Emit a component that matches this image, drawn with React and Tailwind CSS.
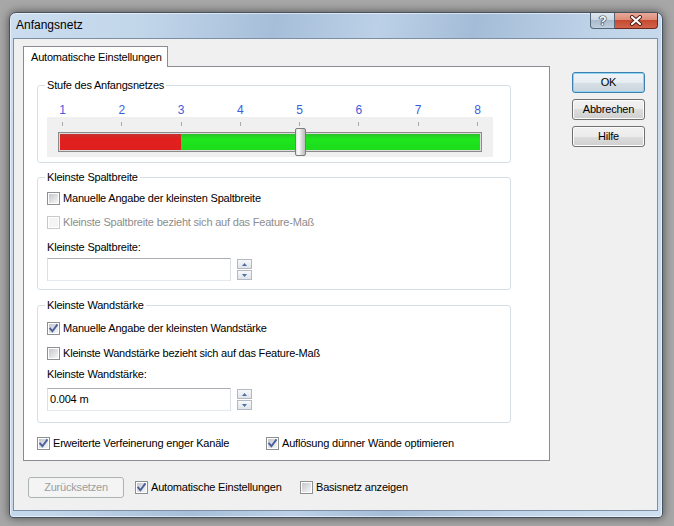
import React from 'react';

const font = "font-['Liberation_Sans',Arial,sans-serif]";

function Check({ checked = false, disabled = false }) {
    return (
        <span className={`relative block w-[13px] h-[13px] shrink-0 border p-[1px] bg-white ${disabled ? 'border-[#c9c9c9]' : 'border-[#8e8f8f]'}`}>
            <span className={`block w-full h-full ${disabled ? 'bg-[#f4f4f4]' : 'bg-linear-to-br from-[#c4c7cd] to-[#f7f7f7]'}`} />
            {checked && (
                <svg className="absolute left-0 top-0" width="11" height="11" viewBox="0 0 11 11">
                    <path d="M2.2 5.6 L4.4 8.2 L8.9 2.2" fill="none" stroke="#4a5f9c" strokeWidth="1.9" strokeLinecap="square" />
                </svg>
            )}
        </span>
    );
}

function CheckRow({ checked, disabled, children, className = '' }) {
    return (
        <div className={`flex items-center h-[13px] gap-[3px] ${className}`}>
            <Check checked={checked} disabled={disabled} />
            <span className={`whitespace-nowrap ${disabled ? 'text-[#8d8d8d]' : ''}`}>{children}</span>
        </div>
    );
}

function Group({ title, className = '', children }) {
    return (
        <div className={`relative ml-[13px] w-[474px] border border-[#d5dfe5] rounded-[3px] ${className}`}>
            <span className="absolute left-[7px] -top-[7px] px-[2px] bg-white leading-[13px] whitespace-nowrap">{title}</span>
            {children}
        </div>
    );
}

function Button({ children, primary, disabled, className = '' }) {
    const look = disabled
        ? 'border-[#adb2b5] bg-[#f4f4f4] text-[#9d9d9d]'
        : primary
            ? 'border-[#3c7fb1] bg-[linear-gradient(#eff4f7,#e6edf2_50%,#d6dfe6_50%,#cbd5dd)] shadow-[inset_0_0_0_1px_#8fd4f2]'
            : 'border-[#707070] bg-[linear-gradient(#f2f2f2,#ebebeb_50%,#dddddd_50%,#cfcfcf)] shadow-[inset_0_0_0_1px_#fcfcfc]';
    return (
        <div className={`h-[21px] flex items-center justify-center border rounded-[3px] ${look} ${className}`}>
            {children}
        </div>
    );
}

function SpinField({ value }) {
    return (
        <div className="flex items-center">
            <div className="w-[184px] h-[23px] border border-[#abadb3] border-l-[#dbdfe6] border-r-[#dbdfe6] border-b-[#e3e9ef] bg-white flex items-center pl-[2px]">
                {value}
            </div>
            <div className="ml-[6px] flex flex-col gap-[1px]">
                <div className="w-[15px] h-[10px] border border-[#b3b9c2] bg-linear-to-b from-[#f7f8fa] to-[#dfe4ea] flex items-center justify-center">
                    <svg width="5" height="3" viewBox="0 0 5 3"><path d="M0 3 L2.5 0 L5 3 Z" fill="#4d6fa3" /></svg>
                </div>
                <div className="w-[15px] h-[10px] border border-[#b3b9c2] bg-linear-to-b from-[#f7f8fa] to-[#dfe4ea] flex items-center justify-center">
                    <svg width="5" height="3" viewBox="0 0 5 3"><path d="M0 0 L2.5 3 L5 0 Z" fill="#4d6fa3" /></svg>
                </div>
            </div>
        </div>
    );
}

const levels = [1, 2, 3, 4, 5, 6, 7, 8];

export default function App() {
    return (
        <div className={`w-[674px] h-[526px] bg-[#a7a7a7] pt-[12px] pl-[9px] overflow-hidden text-[11px] leading-[13px] tracking-[-0.2px] text-black ${font}`}>
            <div className="w-[654px] h-[506px] flex flex-col border border-[#46535f] rounded-t-[7px] rounded-b-[4px] bg-[linear-gradient(100deg,#cbddef_0%,#c2d6ea_18%,#a6bed9_36%,#bcd1e7_50%,#a4bcd7_63%,#c0d4e9_80%,#cfe0f0_100%)] shadow-[0_0_10px_rgba(0,0,0,0.55),inset_0_0_0_1px_rgba(255,255,255,0.55)]">
                {/* title bar */}
                <div className="h-[25px] flex items-start">
                    <span className="ml-[6px] mt-[5px] text-[12px] leading-[14px] tracking-normal">Anfangsnetz</span>
                    <div className="ml-auto mr-[4px] flex">
                        <div className="w-[25px] h-[16px] border border-[#56667a] border-t-0 rounded-bl-[4px] bg-[linear-gradient(#dfe7ef,#cad6e2_50%,#a9bbcd_50%,#bfcfdf)] flex items-center justify-center">
                            <span className="text-white font-bold text-[13px] leading-[13px] [text-shadow:0_0_1px_#1c2a3a,0_0_1px_#1c2a3a,0_0_1px_#1c2a3a,0_0_1px_#1c2a3a]">?</span>
                        </div>
                        <div className="w-[43px] h-[16px] border border-[#6b2a1e] border-l-0 border-t-0 rounded-br-[4px] bg-[linear-gradient(#e9a99a,#dc8a76_50%,#c64a30_50%,#d0654b)] flex items-center justify-center">
                            <svg width="14" height="11" viewBox="0 0 14 11">
                                <path d="M3 2 L11 9 M11 2 L3 9" stroke="#4a1a12" strokeWidth="4" strokeLinecap="round" />
                                <path d="M3 2 L11 9 M11 2 L3 9" stroke="#ffffff" strokeWidth="2.2" strokeLinecap="round" />
                            </svg>
                        </div>
                    </div>
                </div>

                {/* client area */}
                <div className="ml-[3px] w-[645px] h-[473px] border border-[#7d8fa5] bg-[#f0f0f0] flex flex-col">
                    <div className="flex items-start">
                        {/* tab control */}
                        <div className="ml-[9px] mt-[7px] w-[527px] flex flex-col">
                            <div className="relative z-10 w-[145px] h-[21px] -mb-[1px] border border-b-0 border-[#898c95] bg-white pl-[7px] flex items-center">
                                Automatische Einstellungen
                            </div>
                            <div className="h-[395px] border border-[#898c95] bg-white flex flex-col">
                                <Group title="Stufe des Anfangsnetzes" className="mt-[18px] pt-[18px] pb-[5px]">
                                    <div className="ml-[18px] w-[428px] h-[13px] flex justify-between text-[12px] leading-[13px] tracking-normal text-[#3a5ee0]">
                                        {levels.map((n) => (
                                            <span key={n} className="w-[13px] text-center">{n}</span>
                                        ))}
                                    </div>
                                    <div className="ml-[9px] w-[446px] h-[40px] bg-[#f0f0f0] pt-[5px]">
                                        <div className="ml-[9px] w-[428px] h-[4px] flex justify-between">
                                            {levels.map((n) => (
                                                <span key={n} className="w-[13px] flex justify-center">
                                                    <span className="w-[1px] h-[4px] bg-[#a9a9a9]" />
                                                </span>
                                            ))}
                                        </div>
                                        <div className="relative ml-[11px] mt-[6px] w-[424px] h-[20px] border border-[#8b8b8b] p-[1px] bg-[#dcdcdc]">
                                            <div className="flex h-full">
                                                <div className="w-[121px] bg-[linear-gradient(#c23232,#e21f1f_30%,#df1f1f)]" />
                                                <div className="flex-1 bg-[linear-gradient(#2cc02c,#1ee61e_30%,#1cdc1c)]" />
                                            </div>
                                            <div className="absolute left-[236px] -top-[5px] w-[11px] h-[28px] border border-[#7b7b7b] rounded-[2px] bg-[linear-gradient(90deg,#e2e2e2,#fbfbfb_30%,#d3d3d3_70%,#bcbcbc)]" />
                                        </div>
                                    </div>
                                </Group>

                                <Group title="Kleinste Spaltbreite" className="mt-[14px] pt-[14px] pb-[8px] pl-[9px]">
                                    <CheckRow>Manuelle Angabe der kleinsten Spaltbreite</CheckRow>
                                    <CheckRow disabled className="mt-[11px]">Kleinste Spaltbreite bezieht sich auf das Feature-Maß</CheckRow>
                                    <div className="mt-[12px] h-[13px]">Kleinste Spaltbreite:</div>
                                    <div className="mt-[4px]">
                                        <SpinField value="" />
                                    </div>
                                </Group>

                                <Group title="Kleinste Wandstärke" className="mt-[15px] pt-[16px] pb-[11px] pl-[9px]">
                                    <CheckRow checked>Manuelle Angabe der kleinsten Wandstärke</CheckRow>
                                    <CheckRow className="mt-[12px]">Kleinste Wandstärke bezieht sich auf das Feature-Maß</CheckRow>
                                    <div className="mt-[8px] h-[13px]">Kleinste Wandstärke:</div>
                                    <div className="mt-[7px]">
                                        <SpinField value="0.004 m" />
                                    </div>
                                </Group>

                                <div className="ml-[13px] mt-[14px] flex">
                                    <CheckRow checked className="w-[229px]">Erweiterte Verfeinerung enger Kanäle</CheckRow>
                                    <CheckRow checked>Auflösung dünner Wände optimieren</CheckRow>
                                </div>
                            </div>
                        </div>

                        {/* dialog buttons */}
                        <div className="ml-[22px] mt-[33px] w-[73px] flex flex-col gap-[6px]">
                            <Button primary>OK</Button>
                            <Button>Abbrechen</Button>
                            <Button>Hilfe</Button>
                        </div>
                    </div>

                    <div className="mt-[16px] ml-[14px] flex items-center">
                        <Button disabled className="w-[96px]">Zurücksetzen</Button>
                        <CheckRow checked className="ml-[11px] w-[165px]">Automatische Einstellungen</CheckRow>
                        <CheckRow>Basisnetz anzeigen</CheckRow>
                    </div>
                </div>
            </div>
        </div>
    );
}
